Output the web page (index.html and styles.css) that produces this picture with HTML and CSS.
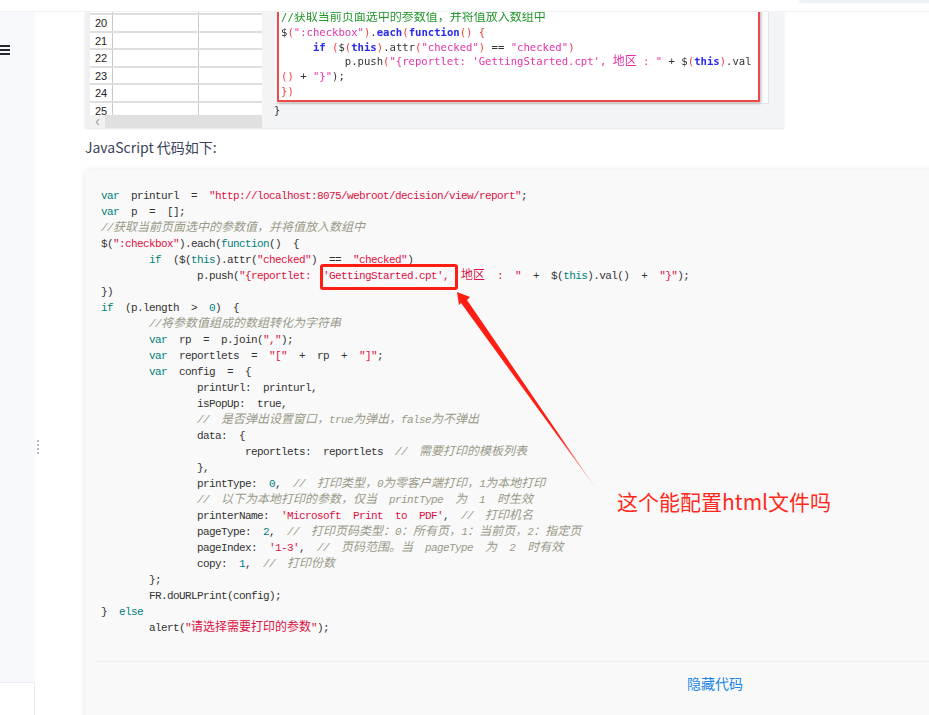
FILE: index.html
```html
<!DOCTYPE html>
<html lang="zh-CN">
<head>
<meta charset="utf-8">
<title>JavaScript 代码</title>
<link rel="stylesheet" href="styles.css">
</head>
<body>
<header class="topbar"><div class="pill"></div></header>
<div class="shell">
  <aside class="sidebar">
    <div class="burger"><i></i><i></i><i></i></div>
    <div class="side-foot"></div>
  </aside>
  <div class="dots"><i></i><i></i><i></i><i></i></div>
  <main class="content">
    <figure class="shot">
      <div class="sheet">
        <div class="rows">
          <div class="row first"><b></b><u></u><u></u></div>
          <div class="row"><b>20</b><u></u><u></u></div>
          <div class="row"><b>21</b><u></u><u></u></div>
          <div class="row"><b>22</b><u></u><u></u></div>
          <div class="row"><b>23</b><u></u><u></u></div>
          <div class="row"><b>24</b><u></u><u></u></div>
          <div class="row last"><b>25</b><u></u><u></u></div>
        </div>
        <div class="hscroll"><span class="hbtn">‹</span></div>
      </div>
      <div class="editor">
        <div class="card">
<pre class="marked"><span class="g">//<span class="zz">获取当前页面选中的参数值&#xFF0C;并将值放入数组中</span></span>
$<span class="r">(</span><span class="p">":checkbox"</span><span class="r">)</span>.<span class="bl">each</span><span class="r">(</span><span class="bl">function</span><span class="r">() {</span>
     <span class="bl">if</span> <span class="r">(</span>$<span class="r">(</span><span class="bl">this</span><span class="r">)</span>.attr<span class="r">(</span><span class="p">"checked"</span><span class="r">)</span> == <span class="p">"checked"</span><span class="r">)</span>
          p.push<span class="r">(</span><span class="p">"{reportlet: 'GettingStarted.cpt', <span class="zz">地区</span> : "</span> + $<span class="r">(</span><span class="bl">this</span><span class="r">)</span>.val
<span class="r">()</span> + <span class="p">"}"</span>);
<span class="r">})</span></pre>
        </div>
        <div class="tail">}</div>
      </div>
    </figure>
    <p class="lead">JavaScript 代码如下:</p>
    <section class="codebox">
<pre class="code"><span class="k">var</span>  printurl  =  <span class="s">"http://localhost:8075/webroot/decision/view/report"</span>;
<span class="k">var</span>  p  =  [];
<span class="c">//<span class="z">获取当前页面选中的参数值&#xFF0C;并将值放入数组中</span></span>
$(<span class="s">":checkbox"</span>).each(<span class="k">function</span>()  {
        <span class="k">if</span>  ($(<span class="k">this</span>).attr(<span class="s">"checked"</span>)  ==  <span class="s">"checked"</span>)
                p.push(<span class="s">"{reportlet:  'GettingStarted.cpt',  <span class="z">地区</span>  :  "</span>  +  $(<span class="k">this</span>).val()  +  <span class="s">"}"</span>);
})
<span class="k">if</span>  (p.length  &gt;  <span class="k">0</span>)  {
        <span class="c">//<span class="z">将参数值组成的数组转化为字符串</span></span>
        <span class="k">var</span>  rp  =  p.join(<span class="s">","</span>);
        <span class="k">var</span>  reportlets  =  <span class="s">"["</span>  +  rp  +  <span class="s">"]"</span>;
        <span class="k">var</span>  config  =  {
                printUrl:  printurl,
                isPopUp:  true,
                <span class="c">//  <span class="z">是否弹出设置窗口&#xFF0C;</span>true<span class="z">为弹出&#xFF0C;</span>false<span class="z">为不弹出</span></span>
                data:  {
                        reportlets:  reportlets  <span class="c">//  <span class="z">需要打印的模板列表</span></span>
                },
                printType:  <span class="k">0</span>,  <span class="c">//  <span class="z">打印类型&#xFF0C;</span>0<span class="z">为零客户端打印&#xFF0C;</span>1<span class="z">为本地打印</span></span>
                <span class="c">//  <span class="z">以下为本地打印的参数&#xFF0C;仅当</span>  printType  <span class="z">为</span>  1  <span class="z">时生效</span></span>
                printerName:  <span class="s">'Microsoft  Print  to  PDF'</span>,  <span class="c">//  <span class="z">打印机名</span></span>
                pageType:  <span class="k">2</span>,  <span class="c">//  <span class="z">打印页码类型&#xFF1A;</span>0<span class="z">&#xFF1A;所有页&#xFF0C;</span>1<span class="z">&#xFF1A;当前页&#xFF0C;</span>2<span class="z">&#xFF1A;指定页</span></span>
                pageIndex:  <span class="s">'1-3'</span>,  <span class="c">//  <span class="z">页码范围。当</span>  pageType  <span class="z">为</span>  2  <span class="z">时有效</span></span>
                copy:  <span class="k">1</span>,  <span class="c">//  <span class="z">打印份数</span></span>
        };
        FR.doURLPrint(config);
}  <span class="k">else</span>
        alert(<span class="s">"<span class="z">请选择需要打印的参数</span>"</span>);</pre>
      <div class="codefoot"><a class="toggle">隐藏代码</a></div>
    </section>
  </main>
</div>
<div class="markbox"></div>
<svg class="arrow" width="170" height="220" viewBox="0 0 170 220" aria-hidden="true">
  <defs>
    <linearGradient id="fade" gradientUnits="userSpaceOnUse" x1="108" y1="146" x2="147" y2="202">
      <stop offset="0" stop-color="#ff1e14"/>
      <stop offset="1" stop-color="#ff1e14" stop-opacity="0.15"/>
    </linearGradient>
  </defs>
  <path d="M7 4 L20 9 L17 12 L147 202 L11 15 L9 17 Z" fill="url(#fade)"/>
</svg>
<div class="note">这个能配置html文件吗</div>
</body>
</html>
```
FILE: styles.css
```css
* { box-sizing: border-box; }
html, body { margin: 0; height: 100%; }
body {
  width: 929px; height: 715px; overflow: hidden; position: relative;
  background: #fff;
  font-family: "Noto Sans CJK SC", "Open Sans", sans-serif;
  color: #3a4358;
}
.topbar {
  height: 12px; background: #fff; border-bottom: 1px solid #eef0f4;
  display: flex; justify-content: flex-end;
}
.pill { width: 130px; height: 3px; background: #edf2f7; border-radius: 0 0 0 8px; }
.shell { display: flex; height: 703px; position: relative; }
.sidebar {
  width: 35px; flex: none; background: #f7f9fd;
  display: flex; flex-direction: column; justify-content: space-between;
}
.burger { margin-top: 33px; width: 10px; display: flex; flex-direction: column; gap: 2px; }
.burger i { display: block; height: 2px; background: #23272e; }
.side-foot { height: 33px; background: #fff; border-top: 1px solid #e9ebef; border-right: 1px solid #e9ebef; }
.dots { position: absolute; left: 37px; top: 428px; display: flex; flex-direction: column; gap: 2px; }
.dots i { display: block; width: 2px; height: 2px; background: #b2bccb; }
.content { flex: 1; min-width: 0; padding-left: 50px; overflow: hidden; }

.shot {
  margin: 0; width: 699px; height: 116px; display: flex; overflow: hidden;
  box-shadow: 0 1px 2px rgba(0,0,0,.1);
}
.sheet { width: 177px; flex: none; background: #f0f0f0; padding-left: 5px; display: flex; flex-direction: column; filter: blur(.25px); }
.rows { height: 103px; overflow: hidden; }
.row {
  height: 17.5px; display: flex; border-bottom: 2px solid #dedede;
  background: #fff;
}
.row.first { height: 3px; }
.row b {
  width: 23px; flex: none; background: #fff; border-right: 1px solid #cacaca;
  font: 11px/16px "Liberation Sans", sans-serif; color: #222; padding-left: 5px;
}
.row u { width: 86px; flex: none; border-right: 1px solid #cacaca; }
.row u + u { border-right: 0; width: 63px; }
.hscroll { height: 13px; background: #e0e0e0; }
.hbtn {
  display: block; width: 15px; height: 13px; background: #f1f1f1; color: #999;
  font: 15px/12px "Liberation Sans", sans-serif; text-align: center;
}
.editor {
  flex: 1; background: #f3f4f6; padding-left: 13px;
  filter: blur(.25px); overflow: hidden;
}
.card { margin-top: -10px; width: 494px; height: 102px; background: #fff; border-right: 1px solid #e3e3e3; border-bottom: 1px solid #e3e3e3; padding-left: 2px; }
.marked {
  margin: 0; width: 483px; height: 100px;
  border: 2px solid #f0474a; box-shadow: 1px 1px 3px rgba(0,0,0,.3);
  padding: 6.3px 0 0 2px;
  font: 10.6px/14.7px "DejaVu Sans Mono", monospace; color: #333;
}
.g { color: #22962a; }
.p { color: #e632a8; }
.r { color: #f43c3c; }
.bl { color: #2a2aee; font-weight: 700; }
.zz { font-family: "Noto Sans CJK SC", sans-serif; font-size: 12px; line-height: 0; }
.tail { margin-left: -1px; font: 10.5px/12px "DejaVu Sans Mono", monospace; color: #333; }

.lead { margin: 0; height: 42px; padding-top: 8px; font-size: 14px; line-height: 22px; color: #3a4358; }

.codebox {
  width: 1260px; height: 560px; background: #f9f9f9; border-radius: 4px 0 0 4px;
  box-shadow: 0 0 6px rgba(0,0,0,.1);
  padding: 18px 11px 0; display: flex; flex-direction: column;
}
.code {
  margin: 0 0 0 5px; height: 473px;
  font: 11px/16px "Liberation Mono", monospace; letter-spacing: -.6px; color: #333;
}
.k { color: #008080; }
.s { color: #d14; }
.c { color: #998; font-style: italic; }
.z { font-family: "Noto Sans CJK SC", sans-serif; font-size: 12px; letter-spacing: 0; line-height: 0; }
.codefoot { border-top: 1px solid #eee; text-align: center; padding-top: 8px; }
.toggle { font-size: 14px; line-height: 22px; color: #1a86e8; }

.markbox {
  position: absolute; left: 320px; top: 264px; width: 138px; height: 26px;
  border: 3px solid #ff1e14; border-radius: 3px;
}
.arrow { position: absolute; left: 450px; top: 288px; }
.note {
  position: absolute; left: 617px; top: 487px;
  font-size: 21px; line-height: 28px; color: #ff2a20; white-space: nowrap;
}
```
